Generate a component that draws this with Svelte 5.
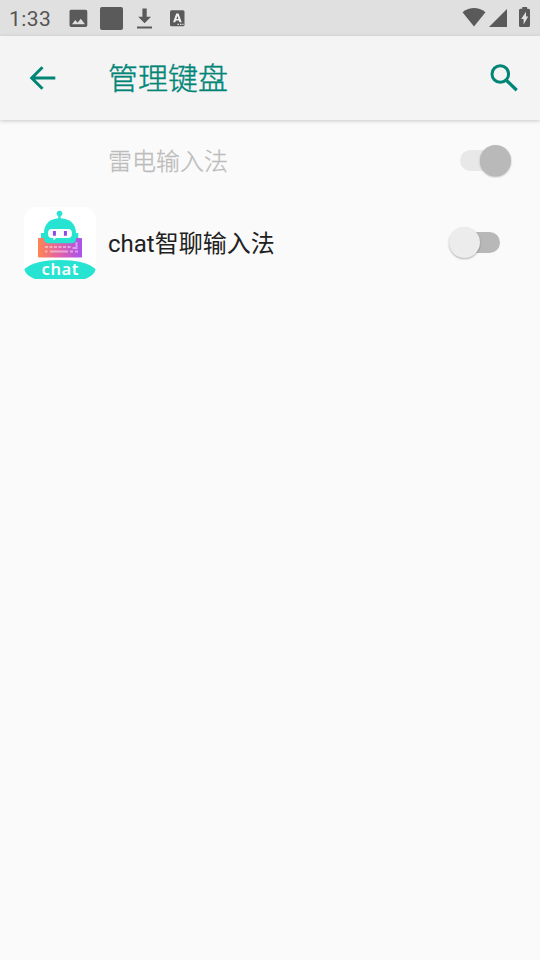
<script>
  let keyboards = $state([
    { id: 'leidian', name: '雷电输入法', enabled: true, locked: true, icon: false },
    { id: 'chat', name: 'chat智聊输入法', enabled: false, locked: false, icon: true },
  ]);

  function toggle(keyboard) {
    keyboard.enabled = !keyboard.enabled;
  }
</script>

<div class="screen">
  <div class="status-bar">
    <span class="clock">1:33</span>
    <svg class="notifications" width="122" height="36" viewBox="66 0 122 36" fill="#5a5a5a">
      <path fill-rule="evenodd" d="M71 9.700h14.500q1.800 0 1.800 1.800v13.700q0 1.800-1.800 1.800H71.300q-1.800 0-1.800-1.800V11.500q0-1.800 1.500-1.800zM72 24.300h13l-4.200-5.600-3.200 4.100-2.300-2.800z" />
      <rect x="100" y="7" width="23" height="23" rx="2" />
      <path d="M142.400 8.500h4.300v8.300h4.300l-6.400 6.400-6.400-6.400h4.200zM137 26.500h15v2h-15z" />
      <rect x="170" y="10.300" width="14.500" height="16" rx="1.500" />
      <path fill-rule="evenodd" d="M176.200 13.500h2.400l3.100 8.800h-2.200l-.6-1.800h-3l-.6 1.800h-2.200zM177.400 15.800l-1 3.100h2z" fill="#f0f0f0" />
      <path d="M177.500 23.700h1.500v1.300h-1.500zM180 23.700h1.500v1.300h-1.500zM182.400 23.700h1.200v1.300h-1.200z" fill="#e0e0e0" />
    </svg>
    <svg class="system" width="72" height="36" viewBox="460 0 72 36" fill="#5a5a5a">
      <path d="M462.500 12.200q11.500-8.400 23 0L474 26.500z" />
      <path d="M507 9v18h-18z" />
      <path d="M522.300 7h4.800v1.700h1.400q1.500 0 1.500 1.500v15.300q0 1.500-1.500 1.500h-8q-1.500 0-1.500-1.500V10.200q0-1.500 1.500-1.500h1.800z" />
      <path d="M526 11.800v4.700h2.200l-4.600 8v-5.500h-2.400z" fill="#e0e0e0" />
    </svg>
  </div>

  <header>
    <button class="icon-button" aria-label="返回">
      <svg width="28" height="28" viewBox="0 0 28 28" fill="none" stroke="#008577" stroke-width="3">
        <path d="M27.300 14H4M14.500 3.200L3.700 14l10.800 10.800" />
      </svg>
    </button>
    <h1>管理键盘</h1>
    <button class="icon-button" aria-label="搜索">
      <svg width="30" height="30" viewBox="0 0 30 30" fill="none" stroke="#008577">
        <circle cx="11.300" cy="11" r="8.300" stroke-width="3" />
        <path d="M17.300 17.200l10.400 10" stroke-width="3.300" />
      </svg>
    </button>
  </header>

  <main>
    {#each keyboards as keyboard (keyboard.id)}
      <div class="row" class:locked={keyboard.locked}>
        <div class="app-icon">
          {#if keyboard.icon}
            <svg width="72" height="72" viewBox="0 0 72 72">
              <defs>
                <linearGradient id="keys" x1="0" y1="0.400" x2="1" y2="0.400">
                  <stop offset="0" stop-color="#ff8551" />
                  <stop offset="0.500" stop-color="#e05fa8" />
                  <stop offset="1" stop-color="#a852f0" />
                </linearGradient>
              </defs>
              <rect width="72" height="72" rx="13" fill="#fff" />
              <rect x="14" y="31" width="44" height="19.500" rx="1" fill="url(#keys)" />
              <g stroke="#fff" stroke-opacity="0.450" stroke-width="2" fill="none">
                <path d="M21 40h27" stroke-dasharray="3 1.500" />
                <path d="M21 44.500h2.500M26 44.500h18M46 44.500h3M51 44.500h3M52.500 35v6h-4" />
              </g>
              <path d="M34.200 8h2.400v5h-2.400zM17 26h3v5h-3zM52 26h2.300v5H52z" fill="#26e3d2" />
              <circle cx="35.500" cy="6.600" r="2.800" fill="#26e3d2" />
              <path d="M20 26C20 16 27 11.300 35.800 11.300S52 16 52 26v5.500q0 4.800-4.500 4.800h-23Q20 36.300 20 31.500z" fill="#26e3d2" />
              <path d="M28 22h16q4 0 4 4.400t-4 4.600H32l-2 2.200-1-2.200h-1q-4 0-4-4.600t4-4.400z" fill="#fff" />
              <path d="M28.900 24h3v4.800h-3zM39.900 24h3v4.800h-3z" fill="#8a49ed" />
              <path d="M.5 62C7 56 20 53 36 53s29 3 35.500 9C71 67 66 70 61 72H11C6 70 1 67 .5 62z" fill="#26e3d2" />
              <text x="36" y="68" text-anchor="middle" textLength="37">chat</text>
            </svg>
          {/if}
        </div>
        <span class="name">{keyboard.name}</span>
        <button
          class="switch"
          class:on={keyboard.enabled}
          role="switch"
          aria-checked={keyboard.enabled}
          aria-label={keyboard.name}
          disabled={keyboard.locked}
          onclick={() => toggle(keyboard)}
        >
          <span class="thumb"></span>
        </button>
      </div>
    {/each}
  </main>
</div>

<style>
  :global(body) {
    background: #fafafa;
  }

  .screen {
    height: 960px;
    overflow: hidden;
    background: #fafafa;
    font-family: Roboto, 'Noto Sans CJK SC', sans-serif;
  }

  .status-bar {
    display: flex;
    height: 36px;
    padding: 0 8px 0 9px;
    background: #e0e0e0;
  }

  .clock {
    width: 57px;
    color: #555;
    font-size: 21px;
    line-height: 38px;
    letter-spacing: 0.4px;
  }

  .system {
    margin-left: auto;
  }

  header {
    display: flex;
    align-items: center;
    height: 84px;
    padding: 0 21px 0 28px;
    background: #f4f4f4;
    box-shadow: 0 1px 4px rgba(0, 0, 0, 0.2);
  }

  button {
    padding: 0;
    border: none;
    background: none;
  }

  .icon-button {
    display: flex;
  }

  h1 {
    flex: 1;
    margin: 0 0 0 52px;
    padding-top: 2px;
    color: #008577;
    font-size: 30px;
    font-weight: 300;
    line-height: 40px;
    -webkit-text-stroke: 0.4px;
  }

  .row {
    display: flex;
    align-items: center;
    height: 81px;
    padding: 0 29px 0 24px;
  }

  .row + .row {
    height: 83px;
  }

  .app-icon {
    display: flex;
    width: 72px;
    height: 72px;
    margin-right: 12px;
  }

  .app-icon text {
    fill: #fff;
    font: 600 16.5px 'Noto Sans', sans-serif;
  }

  .row + .row .app-icon {
    margin-top: 1px;
  }

  .name {
    flex: 1;
    padding-top: 3px;
    color: #212121;
    font-size: 24px;
    line-height: 36px;
  }

  .locked .name {
    color: #bcbcbc;
    font-weight: 300;
    -webkit-text-stroke: 0.3px;
  }

  .switch {
    display: flex;
    align-items: center;
    width: 40px;
    height: 21px;
    margin-right: 11px;
    border-radius: 11px;
    background: #b8b8b8;
  }

  .thumb {
    flex: none;
    width: 31px;
    height: 31px;
    margin-left: -11px;
    border-radius: 50%;
    background: #ececec;
    box-shadow: 0 1px 2px rgba(0, 0, 0, 0.3);
  }

  .on {
    background: #e8e8e8;
  }

  .on .thumb {
    margin-left: 20px;
    background: #b9b9b9;
  }
</style>
